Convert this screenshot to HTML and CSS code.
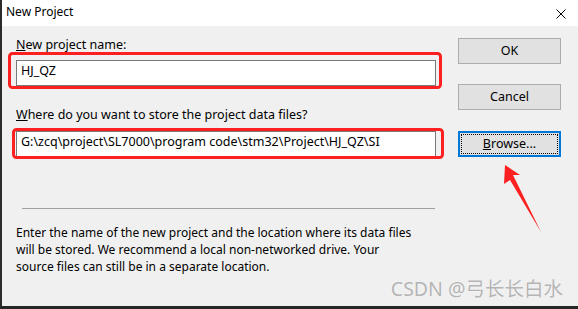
FILE: index.html
```html
<!DOCTYPE html>
<html lang="en">
<head>
    <meta charset="UTF-8">
    <title>New Project</title>
    <link rel="stylesheet" href="styles.css">
</head>
<body>
    <div class="window">
        <div class="titlebar">
            <span class="title">New Project</span>
            <svg class="close" width="10" height="10" viewBox="0 0 10 10">
                <path d="M0.5 0.5 L9.5 9.5 M9.5 0.5 L0.5 9.5" stroke="#000" stroke-width="1"/>
            </svg>
        </div>

        <div class="content">
            <div class="fields">
                <div class="label"><u>N</u>ew project name:</div>
                <div class="edit name">HJ_QZ</div>
                <div class="label where"><u>W</u>here do you want to store the project data files?</div>
                <div class="edit path">G:\zcq\project\SL7000\program code\stm32\Project\HJ_QZ\SI</div>
                <div class="sep"></div>
                <p class="note">Enter the name of the new project and the location where its data files<br>will be stored. We recommend a local non-networked drive. Your<br>source files can still be in a separate location.</p>
            </div>

            <div class="buttons">
                <div class="btn">OK</div>
                <div class="btn">Cancel</div>
                <div class="btn focus"><span class="ring"><u>B</u>rowse...</span></div>
            </div>
        </div>

        <!-- red marks drawn over the dialog -->
        <svg class="marks" width="578" height="309" viewBox="0 0 578 309">
            <rect x="9.5" y="53.5" width="431" height="34" rx="3" fill="none" stroke="#fc2020" stroke-width="3"/>
            <rect x="13.5" y="129.5" width="429" height="28" rx="3" fill="none" stroke="#fc2020" stroke-width="3"/>
            <polygon points="505,165 520,175 513,175 541,232 510,180 504,184" fill="#fc2020"/>
        </svg>

        <div class="watermark">CSDN @弓长长白水</div>
    </div>
</body>
</html>
```

FILE: styles.css
```css
* {
    margin: 0;
    padding: 0;
    box-sizing: border-box;
}

body {
    font-family: "Noto Sans", "Noto Sans CJK SC", sans-serif;
    font-size: 12px;
    color: #000;
    background: #f0f0f0;
}

.window {
    position: relative;
    width: 578px;
    height: 309px;
    background: #f0f0f0;
    border-left: 2px solid #2b2b2b;
    border-bottom: 3px solid #262626;
    overflow: hidden;
}

.titlebar {
    display: flex;
    justify-content: space-between;
    height: 26px;
    padding: 4px 12px 0 4px;
    background: #fff;
    line-height: 16px;
}

.close {
    margin-top: 5px;
}

.content {
    display: flex;
    gap: 22px;
    padding: 11px 0 0 14px;
}

.fields {
    width: 420px;
}

.label {
    font-size: 12.5px;
    line-height: 16px;
    height: 16px;
}

.label.where {
    margin-top: 21px;
}

.edit {
    height: 26px;
    margin-top: 7px;
    padding: 0 4px;
    border: 1px solid #7a7a7a;
    background: #fff;
    font-size: 12.5px;
    line-height: 19px;
    white-space: nowrap;
}

.edit.path {
    margin-top: 8px;
}

.sep {
    height: 1px;
    margin: 51px 1px 0 6px;
    background: #a0a0a0;
}

.note {
    margin-top: 15px;
    line-height: 17px;
}

.buttons {
    display: flex;
    flex-direction: column;
    width: 103px;
    padding-top: 1px;
}

.btn {
    height: 26px;
    border: 1px solid #adadad;
    background: #e1e1e1;
    text-align: center;
    font-size: 12.5px;
    line-height: 23px;
}

.btn + .btn {
    margin-top: 20px;
}

.btn.focus {
    margin-top: 21px;
    border: 2px solid #0078d7;
    padding: 1px;
}

.ring {
    display: block;
    height: 100%;
    border: 1px dotted #000;
    line-height: 18px;
}

.marks {
    position: absolute;
    left: -2px;
    top: 0;
    pointer-events: none;
}

.watermark {
    position: absolute;
    right: 15px;
    bottom: 6px;
    font-size: 19.5px;
    line-height: 22px;
    color: #b4b4b4;
    text-shadow: 0 0 1px #fff;
}
```
